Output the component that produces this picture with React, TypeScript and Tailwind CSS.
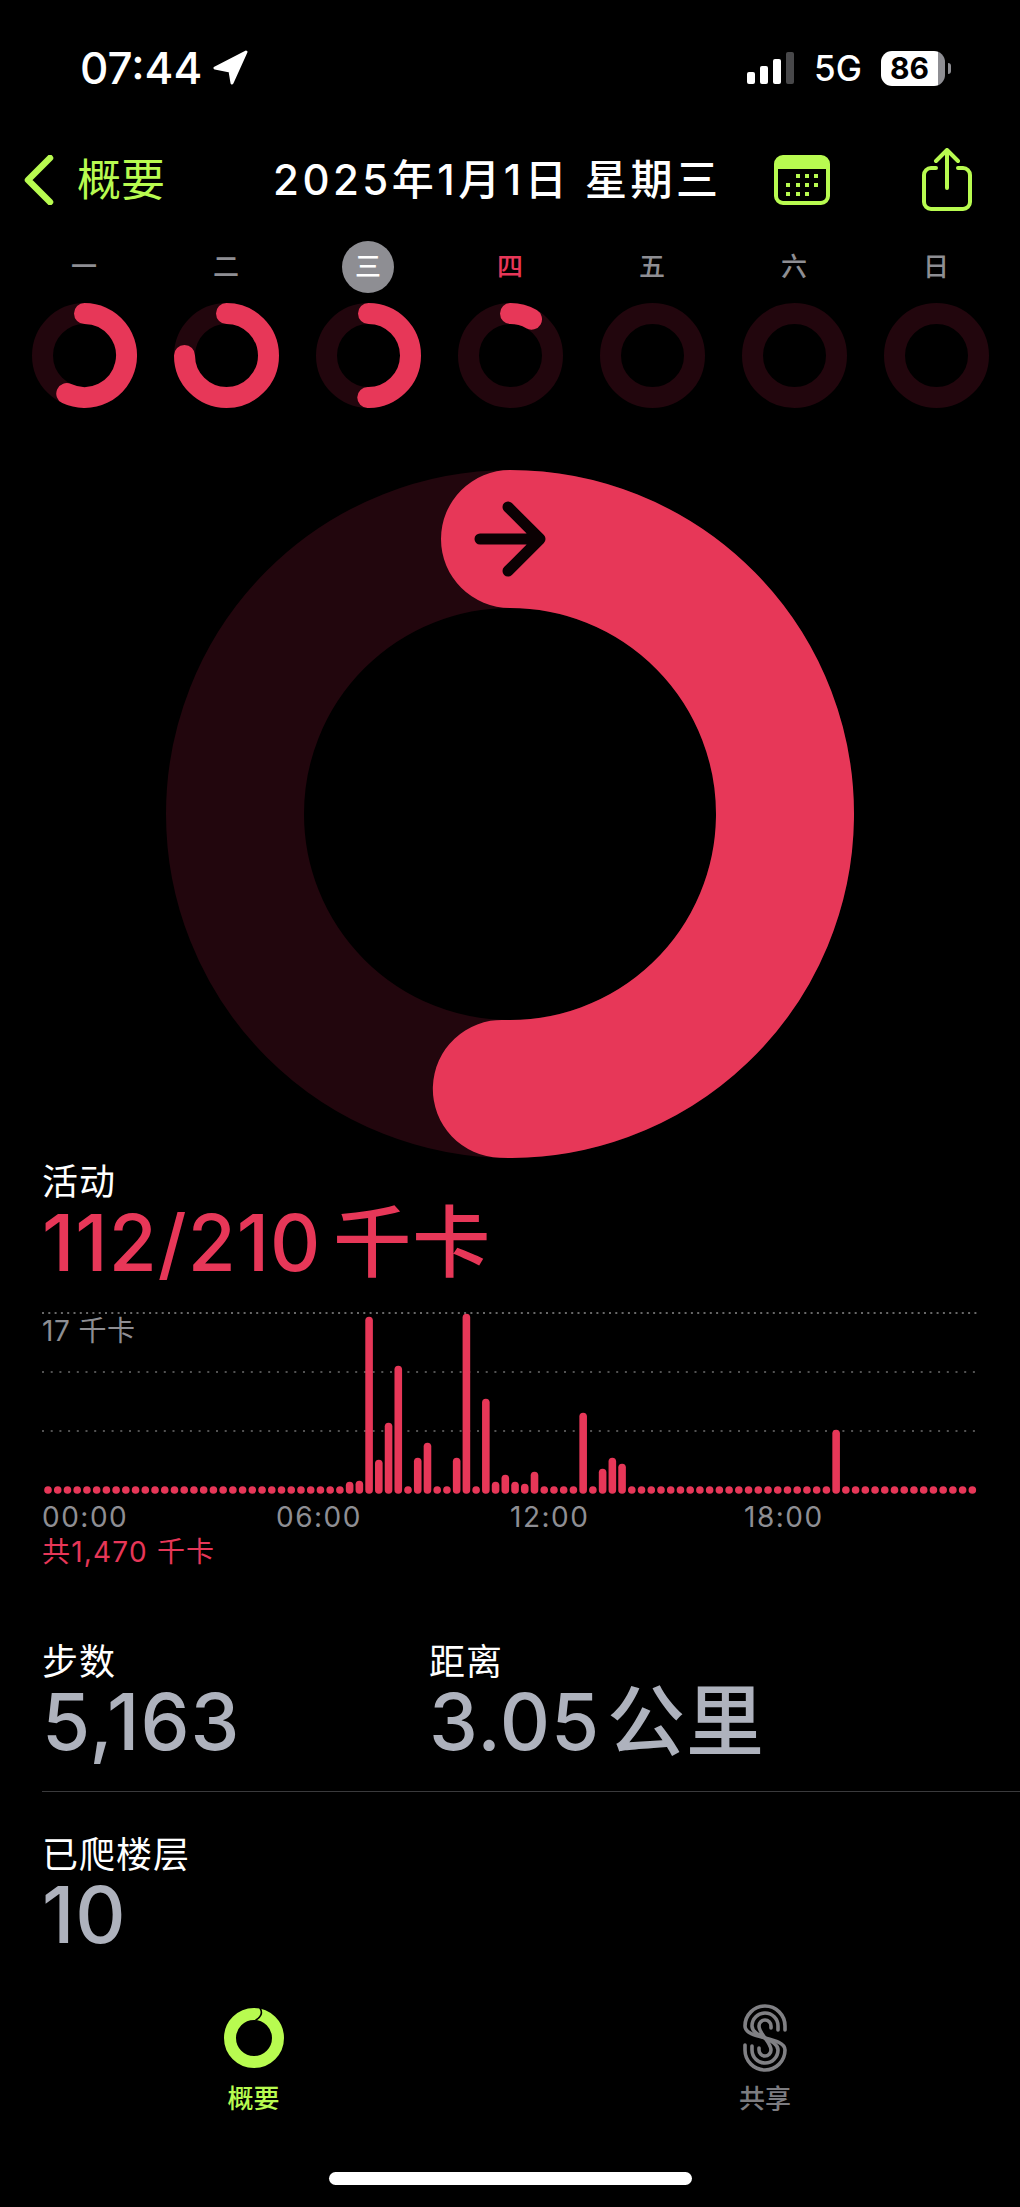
const days = ["一", "二", "三", "四", "五", "六", "日"];
// arc length of each day's ring in degrees
const weekRings = [205, 270, 181, 30, 0, 0, 0];

// 15-minute buckets, bar height in px; anything missing is a baseline dot
const bars: Record<number, number> = {
  31: 12, 32: 13, 33: 177, 34: 34, 35: 71, 36: 128, 38: 36, 39: 51, 42: 36, 43: 180,
  45: 95, 46: 12, 47: 19, 48: 12, 49: 10, 50: 22, 55: 81, 57: 25, 58: 36, 59: 30, 81: 64,
};

function Ring({ size, stroke, degrees, children }: { size: number; stroke: number; degrees: number; children?: React.ReactNode }) {
  const c = size / 2;
  const r = c - stroke / 2;
  const a = (degrees * Math.PI) / 180;
  const x = c + r * Math.sin(a);
  const y = c - r * Math.cos(a);
  return (
    <svg width={size} height={size} viewBox={`0 0 ${size} ${size}`} className="block">
      <circle cx={c} cy={c} r={r} fill="none" stroke="#22060d" strokeWidth={stroke} />
      {degrees > 0 && (
        <path
          d={`M${c} ${c - r} A${r} ${r} 0 ${degrees > 180 ? 1 : 0} 1 ${x} ${y}`}
          fill="none"
          stroke="#e73758"
          strokeWidth={stroke}
          strokeLinecap="round"
        />
      )}
      {children}
    </svg>
  );
}

function ActivityChart() {
  return (
    <svg width="940" height="186" viewBox="0 0 940 186" className="block">
      <line x1="0" x2="936" y1="3" y2="3" stroke="#8a8a8a" strokeWidth="1.5" strokeDasharray="2 4.3" />
      <line x1="0" x2="936" y1="62" y2="62" stroke="#6e6e6e" strokeWidth="1.5" strokeDasharray="2 6.7" />
      <line x1="0" x2="936" y1="121" y2="121" stroke="#6e6e6e" strokeWidth="1.5" strokeDasharray="2 6.7" />
      {Array.from({ length: 96 }, (_, i) => {
        const h = bars[i] ?? 7.6;
        return <rect key={i} x={2.2 + i * 9.73} y={183.8 - h} width="7.6" height={h} rx="3.8" fill="#e73758" />;
      })}
    </svg>
  );
}

function Stat({ label, value }: { label: string; value: string }) {
  return (
    <div>
      <div className="text-[36px] leading-[40px] tracking-[1px] text-white">{label}</div>
      <div className="text-[78px] leading-[80px] font-medium tracking-[1px] [word-spacing:-15px] text-[#aeb2bd] whitespace-nowrap">{value}</div>
    </div>
  );
}

export default function App() {
  return (
    <div className="w-[1020px] h-[2207px] bg-black overflow-hidden font-['Inter','Noto_Sans_CJK_SC',sans-serif]">
      {/* status bar */}
      <div className="h-[136px] flex items-center pl-[80px] text-white">
        <span className="text-[44px] leading-none font-medium w-[125px]">07:44</span>
        <svg width="36" height="36" viewBox="0 0 36 36" className="ml-[8px]">
          <path d="M33 2 L2 18 L17 21 L19 33 Z" fill="white" stroke="white" strokeWidth="3" strokeLinejoin="round" />
        </svg>
        <div className="ml-[498px] flex items-end gap-[5px] h-[32px]">
          <div className="w-[8px] h-[12px] rounded-[2px] bg-white" />
          <div className="w-[8px] h-[18px] rounded-[2px] bg-white" />
          <div className="w-[8px] h-[25px] rounded-[2px] bg-white" />
          <div className="w-[8px] h-[32px] rounded-[2px] bg-[#48484a]" />
        </div>
        <span className="ml-[20px] text-[35px] leading-none font-medium w-[49px]">5G</span>
        <div className="ml-[18px] flex w-[64px] h-[35px] rounded-[11px] overflow-hidden">
          <div className="flex-1 bg-white text-black text-[30px] leading-[35px] font-bold text-center">86</div>
          <div className="w-[7px] bg-[#8e8e93]" />
        </div>
        <div className="ml-[3px] w-[3px] h-[11px] rounded-r-full bg-[#8e8e93]" />
      </div>

      {/* date nav */}
      <div className="h-[88px] flex items-center pl-[24px]">
        <svg width="30" height="50" viewBox="0 0 30 50" fill="none">
          <path d="M26 3 L4 25 L26 47" stroke="#b8fb50" strokeWidth="6.5" strokeLinecap="round" strokeLinejoin="round" />
        </svg>
        <span className="ml-[23px] w-[86px] text-[44px] leading-none text-[#b8fb50] whitespace-nowrap">概要</span>
        <span className="ml-[110px] w-[445px] text-[42px] leading-none font-medium tracking-[3.5px] text-white whitespace-nowrap">2025年1月1日 星期三</span>
        <svg width="56" height="50" viewBox="0 0 56 50" className="ml-[56px]">
          <rect x="2" y="2" width="52" height="46" rx="7" fill="none" stroke="#b8fb50" strokeWidth="4" />
          <path d="M2 14 V9 a7 7 0 0 1 7 -7 H47 a7 7 0 0 1 7 7 V14 Z" fill="#b8fb50" />
          <g fill="#b8fb50">
            <rect x="22" y="19" width="4" height="4" /><rect x="31" y="19" width="4" height="4" /><rect x="40" y="19" width="4" height="4" />
            <rect x="12" y="28" width="4" height="4" /><rect x="22" y="28" width="4" height="4" /><rect x="31" y="28" width="4" height="4" /><rect x="40" y="28" width="4" height="4" />
            <rect x="12" y="37" width="4" height="4" /><rect x="22" y="37" width="4" height="4" /><rect x="31" y="37" width="4" height="4" />
          </g>
        </svg>
        <svg width="50" height="64" viewBox="0 0 50 64" fill="none" className="ml-[92px]" stroke="#b8fb50" strokeWidth="4" strokeLinecap="round" strokeLinejoin="round">
          <path d="M14 20 H9 a7 7 0 0 0 -7 7 V54 a7 7 0 0 0 7 7 H41 a7 7 0 0 0 7 -7 V27 a7 7 0 0 0 -7 -7 H36" />
          <path d="M25 40 V3 M14 13 L25 2 L36 13" />
        </svg>
      </div>

      {/* week strip */}
      <div className="mt-[17px] grid grid-cols-7 px-[13px] text-[26px] font-medium">
        {days.map((d, i) => (
          <div key={d} className="flex justify-center">
            <div className={`w-[52px] h-[52px] pb-[2px] rounded-full flex items-center justify-center ${i === 2 ? "bg-[#8e8e93] text-white" : i === 3 ? "text-[#e73758]" : "text-[#8e8e93]"}`}>
              {d}
            </div>
          </div>
        ))}
      </div>
      <div className="mt-[10px] grid grid-cols-7 px-[13px]">
        {weekRings.map((deg, i) => (
          <div key={i} className="flex justify-center">
            <Ring size={105} stroke={21} degrees={deg} />
          </div>
        ))}
      </div>

      {/* main ring */}
      <div className="mt-[62px] flex justify-center">
        <Ring size={688} stroke={138} degrees={181.7}>
          <path
            d="M314 69 H374 M342 37 L374 69 L342 101"
            fill="none"
            stroke="#0b0103"
            strokeWidth="11"
            strokeLinecap="round"
            strokeLinejoin="round"
          />
        </Ring>
      </div>

      {/* activity */}
      <div className="mt-[4px] pl-[42px]">
        <div className="text-[36px] leading-[40px] tracking-[1px] text-white">活动</div>
        <div className="mt-[1px] text-[78px] leading-[80px] font-medium tracking-[1px] [word-spacing:-10px] text-[#e73758] whitespace-nowrap">112/210 千卡</div>
      </div>

      <div className="relative mt-[27px] pl-[42px]">
        <ActivityChart />
        <span className="absolute left-[42px] top-[4px] text-[28px] leading-[34px] tracking-[0.5px] text-[#8e8e93]">17 千卡</span>
      </div>
      <div className="mt-[4px] ml-[42px] w-[936px] grid grid-cols-4 text-[28px] leading-[34px] tracking-[1.5px] text-[#8e8e93]">
        <span>00:00</span>
        <span>06:00</span>
        <span>12:00</span>
        <span>18:00</span>
      </div>
      <div className="mt-[1px] ml-[42px] text-[28px] leading-[34px] tracking-[1.2px] text-[#e73758]">共1,470 千卡</div>

      {/* stats */}
      <div className="mt-[73px] pl-[42px] flex">
        <div className="w-[387px]">
          <Stat label="步数" value="5,163" />
        </div>
        <Stat label="距离" value="3.05 公里" />
      </div>
      <div className="mt-[29px] ml-[42px] h-px bg-[#3a3a3c]" />
      <div className="mt-[43px] pl-[42px]">
        <Stat label="已爬楼层" value="10" />
      </div>

      {/* tab bar */}
      <div className="mt-[49px] grid grid-cols-2">
        <div className="flex flex-col items-center pr-[3px]">
          <div className="h-[68px] flex items-center">
            <svg width="62" height="62" viewBox="0 0 62 62" fill="none">
              <circle cx="31" cy="31" r="24" stroke="#b8fb50" strokeWidth="12" />
              <path d="M37 1 C40 6 38 10 33 13" stroke="black" strokeWidth="1.6" strokeLinecap="round" />
            </svg>
          </div>
          <span className="mt-[12px] text-[26px] leading-[30px] font-medium text-[#b8fb50]">概要</span>
        </div>
        <div className="flex flex-col items-center">
          <svg width="44" height="68" viewBox="0 0 44 68" fill="none" stroke="#808084" strokeWidth="3.6" strokeLinecap="round">
            <path d="M42 26 V22 A20 20 0 0 0 2 22 C2 36 42 32 42 46 A20 20 0 0 1 2 46 V41" />
            <path d="M35 26 V22 A13 13 0 0 0 9 22 C9 33 35 35 35 46 A13 13 0 0 1 9 46 V42" />
            <path d="M28 24 V22 A6 6 0 0 0 16 22 C16 30 28 38 28 46 A6 6 0 0 1 16 46 V44" />
          </svg>
          <span className="mt-[12px] text-[26px] leading-[30px] font-medium text-[#7c7c80]">共享</span>
        </div>
      </div>

      <div className="mt-[58px] mx-auto w-[363px] h-[13px] rounded-full bg-white" />
    </div>
  );
}
